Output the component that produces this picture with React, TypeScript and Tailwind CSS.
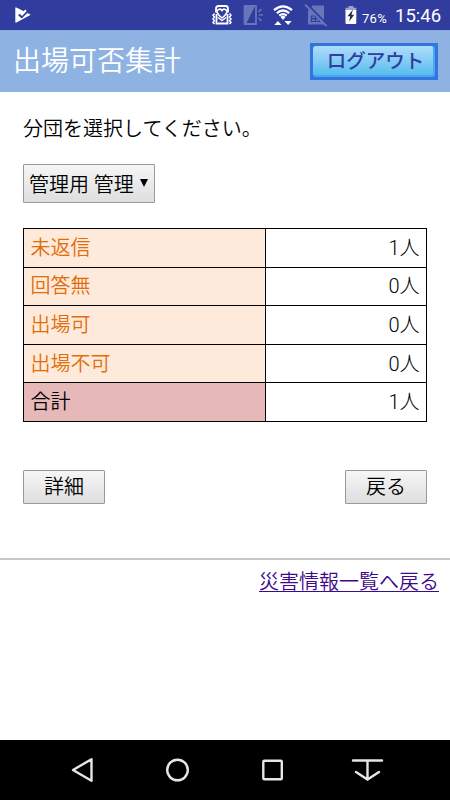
import React from 'react';

const ROWS = [
  { label: '未返信', count: 1 },
  { label: '回答無', count: 0 },
  { label: '出場可', count: 0 },
  { label: '出場不可', count: 0 },
];

function StatusBar() {
  return (
    <div className="h-[30px] shrink-0 bg-[#303c9e] flex items-center text-white font-normal font-[Roboto,sans-serif]">
      <svg className="ml-[14px] w-[18px] h-[18px]" viewBox="0 0 18 18">
        <path d="M1.300 2Q1.300 1 2.300 1.500L16.800 8.800 2.500 16.600Q1.300 17 1.300 16Z" fill="#fff" />
        <path d="M8 1.500L14 1 17 5 13 7z" fill="#303c9e" />
        <path d="M4.800 8.500l2.900 2.600 5.500-5.300" fill="none" stroke="#303c9e" strokeWidth="2" />
        <path d="M6 5.800l2.200 2.400 3.800-4" fill="none" stroke="#fff" strokeWidth="2" />
      </svg>

      {/* Manner mode */}
      <svg className="ml-[180px] w-[20px] h-[22px]" viewBox="0 0 20 22" fill="none" stroke="#fff">
        <path d="M4 8.500V4.500Q4 2 6.500 2h7Q16 2 16 4.500V8.500" strokeWidth="1.800" />
        <path d="M4.500 10v9.500h11V10" strokeWidth="1.800" />
        <path d="M10 6.500C8.500 4 4.300 5.500 5.200 8.600 6 10.800 10 14 10 14s4-3.200 4.800-5.400C15.700 5.500 11.500 4 10 6.500z" strokeWidth="1.600" />
        <path d="M6 13.500l4 3 4-3" strokeWidth="1.400" />
        <path d="M2.500 9.500L1 11.300l1.500 1.800L1 14.900l1.500 1.800L1 18.500 2.500 20M17.500 9.500l1.500 1.800-1.500 1.800 1.500 1.800-1.500 1.800 1.500 1.800-1.500 1.500" strokeWidth="1.500" />
      </svg>

      {/* Screen notification */}
      <svg className="ml-[11px] w-[22px] h-[20px]" viewBox="0 0 22 20" fill="none" stroke="#6974bb">
        <path d="M1.500 1h11.500v18H1.500z" strokeWidth="1.800" />
        <path d="M1.500 1h10.500L3 19H1.500z" fill="#6974bb" stroke="none" />
        <path d="M15.500 7l3-3M16 10h4M15.500 13l3 3" strokeWidth="1.700" />
      </svg>

      {/* Wi-Fi with traffic arrows */}
      <svg className="ml-[8px] w-[20px] h-[22px]" viewBox="0 0 20 22">
        <path d="M1 6.200Q10-1.500 19 6.200M3.800 9.200Q10 3.800 16.200 9.200M6.300 11.700Q10 8.500 13.700 11.700" fill="none" stroke="#fff" strokeWidth="2.200" />
        <path d="M7.500 13Q10 10.700 12.500 13L10 16z" fill="#fff" />
        <path d="M1.300 21l3.600-4 3.600 4zM11.500 17h7.200l-3.600 4z" fill="#fff" />
      </svg>

      {/* No SIM */}
      <svg className="ml-[11px] w-[24px] h-[24px]" viewBox="0 0 24 24">
        <path d="M4 7.500l4.500-5H20v19H4z" fill="#6974bb" />
        <path d="M7.500 18.500v-5.500h8v5.500zM7.500 15.700h8M11.500 13v5.500" fill="none" stroke="#303c9e" strokeWidth="1.200" />
        <path d="M3 1l20 20.500" stroke="#303c9e" strokeWidth="2" />
        <path d="M1 1.500L22.500 23" stroke="#6974bb" strokeWidth="1.800" />
      </svg>

      {/* Battery */}
      <svg className="ml-[17px] w-[12px] h-[20px]" viewBox="0 0 12 20">
        <path d="M3.500 1h5v1.800h2.800V6H.5V2.800h3z" fill="#9aa1d0" />
        <path d="M.5 5h10.800v13q0 1-1 1H1.500q-1 0-1-1z" fill="#fff" />
        <path d="M8 4.500L2.500 11.300h2.700L4.200 16.500l5-6.800H6.400z" fill="#222744" />
      </svg>
      <span className="ml-[5px] mt-[7px] text-[13px] leading-[18px] tracking-[0.300px]">76%</span>
      <span className="ml-[8px] mt-[2px] text-[18.500px] leading-[24px]">15:46</span>
    </div>
  );
}

function Header() {
  return (
    <header className="h-[62px] shrink-0 bg-[#8eb3e2] border-t border-[#85ace1] flex items-center justify-between pl-[13px] pr-[12px]">
      <h1 className="text-[28px] leading-[40px] text-white">出場可否集計</h1>
      <button className="w-[128px] h-[37px] p-[3px] bg-[#3474df] flex">
        <span className="w-full h-full rounded-[3px] bg-linear-to-b from-[#afdbfa] via-[#83cdf5] to-[#56bcef] border-b-2 border-r-2 border-[#48a9ed] pl-[5px] pt-[2px] flex items-center justify-center text-[19.500px] leading-none font-medium text-[#303f9f]">
          ログアウト
        </span>
      </button>
    </header>
  );
}

function NavigationBar() {
  return (
    <div className="h-[60px] shrink-0 bg-black flex items-center pl-[70px]">
      <svg className="w-[24px] h-[26px]" viewBox="0 0 24 26" fill="none" stroke="#e6e6e6" strokeWidth="2.400">
        <path d="M21.500 2.200v21.600L3 13z" strokeLinejoin="round" />
      </svg>
      <svg className="ml-[70px] w-[26px] h-[26px]" viewBox="0 0 26 26" fill="none" stroke="#e6e6e6" strokeWidth="2.400">
        <circle cx="13.500" cy="13" r="10.300" />
      </svg>
      <svg className="ml-[70px] w-[24px] h-[26px]" viewBox="0 0 24 26" fill="none" stroke="#e6e6e6" strokeWidth="2.400">
        <rect x="3.300" y="3.700" width="18.500" height="18.500" rx="1" />
      </svg>
      <svg className="ml-[66px] w-[34px] h-[26px]" viewBox="0 0 34 26" fill="none" stroke="#e6e6e6" strokeWidth="2.400" strokeLinecap="round">
        <path d="M3 3.500h29M17.500 4v18.500M6 15l11.500 7.500 11.500-7.500" />
      </svg>
    </div>
  );
}

export default function App() {
  return (
    <div className="w-[450px] h-[800px] flex flex-col bg-white text-black text-[20px] leading-[30px] font-[350] font-[Roboto,'Noto_Sans_CJK_JP',sans-serif]">
      <StatusBar />
      <Header />

      <main className="flex-1 flex flex-col">
        <div className="px-[23px] pt-[22px] h-[466px] flex flex-col">
          <p>分団を選択してください。</p>
          <button className="mt-[20px] w-[132px] h-[39px] pt-[2px] pl-[5px] flex items-center border border-[#999] rounded-[1px] bg-linear-to-b from-[#f6f6f6] to-[#dedede] whitespace-nowrap">
            管理用 管理
            <svg className="ml-[6px] mt-[-3px] w-[8px] h-[8px]" viewBox="0 0 8 8">
              <path d="M0 0h8L4 8z" />
            </svg>
          </button>

          <table className="mt-[25px] w-[404px] table-fixed border-collapse leading-[30px]">
            <tbody>
              {ROWS.map((row) => (
                <tr key={row.label} className="h-[38.600px]">
                  <th className="w-[242px] border border-black bg-[#fdeadb] pl-[6.500px] text-left font-[350] text-[#e36c0a]">
                    {row.label}
                  </th>
                  <td className="border border-black pr-[6.500px] text-right font-light">{row.count}人</td>
                </tr>
              ))}
              <tr className="h-[38.600px]">
                <th className="border border-black bg-[#e6b8b8] pl-[6.500px] text-left font-[350]">合計</th>
                <td className="border border-black pr-[6.500px] text-right font-light">1人</td>
              </tr>
            </tbody>
          </table>

          <div className="mt-[48px] flex justify-between">
            <button className="w-[82px] h-[34px] flex items-center justify-center border border-[#999] rounded-[1px] bg-linear-to-b from-[#f6f6f6] to-[#dedede]">
              詳細
            </button>
            <button className="w-[82px] h-[34px] flex items-center justify-center border border-[#999] rounded-[1px] bg-linear-to-b from-[#f6f6f6] to-[#dedede]">
              戻る
            </button>
          </div>
        </div>

        <div className="border-t-2 border-[#c8c8c8] pt-[7px] pr-[11px] text-right">
          <a href="#" className="underline decoration-1 underline-offset-[2px] text-[#3c0a8c]">
            災害情報一覧へ戻る
          </a>
        </div>
      </main>

      <NavigationBar />
    </div>
  );
}
